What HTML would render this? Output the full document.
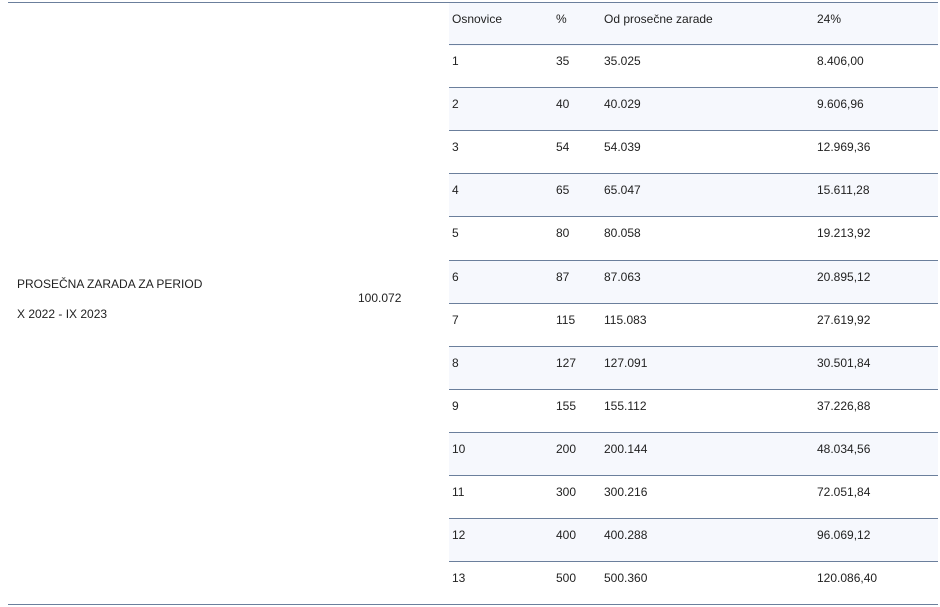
<!DOCTYPE html>
<html><head><meta charset="utf-8"><style>
body{margin:0;width:940px;height:607px;background:#fff;font-family:"Liberation Sans",sans-serif;font-size:12px;color:#222;position:relative;overflow:hidden}
.t{position:absolute;white-space:nowrap;line-height:14px}
.line{position:absolute;height:1px;background:#6b7f9c}
.row{position:absolute;left:449px;width:489px;height:43px;border-top:1px solid #6b7f9c;box-sizing:border-box}
.row.h{border-top:none}
.row.a{background:#f6f8fd}
.row span{position:absolute;top:9px;line-height:14px}
.row span:nth-child(1){left:3px}.row span:nth-child(2){left:107px}.row span:nth-child(3){left:155px}.row span:nth-child(4){left:368px}
</style></head><body>
<div class="line" style="left:8px;width:930px;top:2px"></div>
<div class="line" style="left:8px;width:930px;top:604px"></div>
<div class="t" style="left:17px;top:277px">PROSEČNA ZARADA ZA PERIOD</div>
<div class="t" style="left:17px;top:307px">X 2022 - IX 2023</div>
<div class="t" style="left:358px;top:291px">100.072</div>
<div class="row h a" style="top:3px"><span>Osnovice</span><span>%</span><span>Od prosečne zarade</span><span>24%</span></div>
<div class="row" style="top:44px"><span>1</span><span>35</span><span>35.025</span><span>8.406,00</span></div>
<div class="row a" style="top:87px"><span>2</span><span>40</span><span>40.029</span><span>9.606,96</span></div>
<div class="row" style="top:130px"><span>3</span><span>54</span><span>54.039</span><span>12.969,36</span></div>
<div class="row a" style="top:173px"><span>4</span><span>65</span><span>65.047</span><span>15.611,28</span></div>
<div class="row" style="top:216px"><span>5</span><span>80</span><span>80.058</span><span>19.213,92</span></div>
<div class="row a" style="top:260px"><span>6</span><span>87</span><span>87.063</span><span>20.895,12</span></div>
<div class="row" style="top:303px"><span>7</span><span>115</span><span>115.083</span><span>27.619,92</span></div>
<div class="row a" style="top:346px"><span>8</span><span>127</span><span>127.091</span><span>30.501,84</span></div>
<div class="row" style="top:389px"><span>9</span><span>155</span><span>155.112</span><span>37.226,88</span></div>
<div class="row a" style="top:432px"><span>10</span><span>200</span><span>200.144</span><span>48.034,56</span></div>
<div class="row" style="top:475px"><span>11</span><span>300</span><span>300.216</span><span>72.051,84</span></div>
<div class="row a" style="top:518px"><span>12</span><span>400</span><span>400.288</span><span>96.069,12</span></div>
<div class="row" style="top:561px;height:43px"><span>13</span><span>500</span><span>500.360</span><span>120.086,40</span></div>
</body></html>
